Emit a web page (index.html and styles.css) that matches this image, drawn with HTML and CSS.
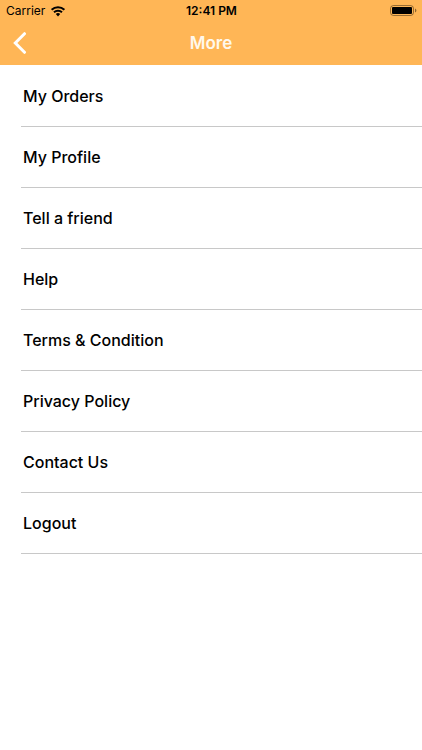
FILE: index.html
```html
<!DOCTYPE html>
<html lang="en">
<head>
<meta charset="utf-8">
<meta name="viewport" content="width=device-width, initial-scale=1">
<title>More</title>
<link rel="stylesheet" href="styles.css">
</head>
<body>
<header class="header">
  <div class="status">
    <div class="carrier">
      <span>Carrier</span>
      <svg class="wifi" viewBox="0 0 16 12" aria-hidden="true">
        <path d="M1.600 4.700a9.300 9.300 0 0 1 12.800 0M4 7.300a5.800 5.800 0 0 1 8 0" fill="none" stroke="#000" stroke-width="2"/>
        <path d="M5.800 9.100a3.200 3.200 0 0 1 4.400 0L8 11.400z"/>
      </svg>
    </div>
    <time class="clock">12:41 PM</time>
    <svg class="battery" viewBox="0 0 27 12" aria-hidden="true">
      <rect x=".5" y=".5" width="23" height="10" rx="3" fill="none" stroke="#000" stroke-opacity=".4"/>
      <rect x="2" y="2" width="20" height="7" rx="1"/>
      <path d="M25 3.500v4q1.400-.6 1.400-2T25 3.500z" fill-opacity=".45"/>
    </svg>
  </div>
  <nav class="navbar">
    <button class="back" type="button" aria-label="Back">
      <svg class="chevron" viewBox="0 0 14 22" aria-hidden="true"><path d="M11.500 1.700 2.300 11l9.200 9.300" fill="none" stroke="#fff" stroke-width="3" stroke-linecap="round"/></svg>
    </button>
    <h1 class="title">More</h1>
  </nav>
</header>
<main>
  <ul class="menu">
    <li><a href="#orders">My Orders</a></li>
    <li><a href="#profile">My Profile</a></li>
    <li><a href="#friend">Tell a friend</a></li>
    <li><a href="#help">Help</a></li>
    <li><a href="#terms">Terms &amp; Condition</a></li>
    <li><a href="#privacy">Privacy Policy</a></li>
    <li><a href="#contact">Contact Us</a></li>
    <li><a href="#logout">Logout</a></li>
  </ul>
</main>
</body>
</html>
```
FILE: styles.css
```css
* { box-sizing: border-box; }
body {
  margin: 0;
  background: #fff;
  color: #000;
  font-family: Inter, "Liberation Sans", sans-serif;
}
.header { background: #ffb656; }
.status {
  display: grid;
  grid-template-columns: 1fr auto 1fr;
  align-items: center;
  height: 21px;
  padding: 0 5px 0 6px;
  font-size: 12px;
}
.carrier { display: flex; align-items: center; gap: 5px; }
.wifi { width: 16px; height: 12px; }
.clock { font-weight: 600; }
.battery { width: 27px; height: 12px; justify-self: end; }
.navbar {
  display: grid;
  grid-template-columns: 44px 1fr 44px;
  align-items: center;
  height: 44px;
}
.back {
  display: flex;
  align-items: center;
  height: 44px;
  padding: 0 0 0 13px;
  border: 0;
  background: none;
}
.chevron { width: 14px; height: 22px; }
.title {
  margin: 0;
  color: #fff8ec;
  font-size: 17px;
  font-weight: 600;
  text-align: center;
}
.menu { margin: 0; padding: 1px 0 0 21px; list-style: none; }
.menu li { border-bottom: 1px solid #c8c8c8; }
.menu a {
  display: block;
  padding: 0 2px;
  color: #000;
  font-size: 16px;
  font-weight: 500;
  line-height: 60px;
  text-decoration: none;
}
```
